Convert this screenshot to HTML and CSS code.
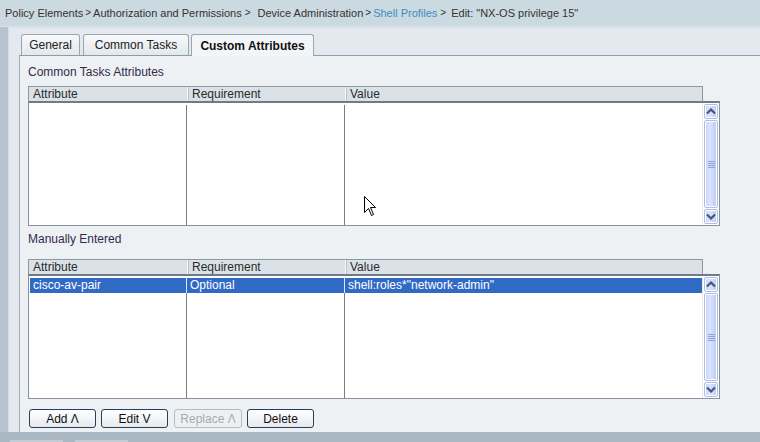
FILE: index.html
```html
<!DOCTYPE html>
<html>
<head>
<meta charset="utf-8">
<link rel="stylesheet" href="styles.css">
</head>
<body>
<div class="crumbs"><span>Policy Elements</span><span class="sep">&gt;</span><span>Authorization and Permissions</span><span class="sep wide">&gt;</span><span>Device Administration</span><span class="sep">&gt;</span><span class="link">Shell Profiles</span><span class="sep last">&gt;</span><span>Edit: "NX-OS privilege 15"</span></div>
<div class="main">
  <div class="strip"></div>
  <div class="frame">
    <div class="tabs">
      <div class="tab t1">General</div>
      <div class="tab t2">Common Tasks</div>
      <div class="tab t3 active">Custom Attributes</div>
    </div>
    <div class="panel">
      <div class="label first">Common Tasks Attributes</div>
      <div class="grid">
        <div class="ghead"><div class="hc c1">Attribute</div><div class="hc c2">Requirement</div><div class="hc c3">Value</div></div>
        <div class="gbody">
          <div class="cols">
            <div class="col c1"></div><div class="col c2"></div><div class="col c3"></div>
          </div>
          <div class="scroll">
            <div class="sbtn"><svg width="10" height="7" viewBox="0 0 10 7"><path d="M1 5.5 L5 1.5 L9 5.5" fill="none" stroke="#46557a" stroke-width="2.2"/></svg></div>
            <div class="thumb"><span class="grip"></span></div>
            <div class="sbtn"><svg width="10" height="7" viewBox="0 0 10 7"><path d="M1 1.5 L5 5.5 L9 1.5" fill="none" stroke="#46557a" stroke-width="2.2"/></svg></div>
          </div>
        </div>
      </div>
      <div class="label second">Manually Entered</div>
      <div class="grid">
        <div class="ghead"><div class="hc c1">Attribute</div><div class="hc c2">Requirement</div><div class="hc c3">Value</div></div>
        <div class="gbody">
          <div class="cols">
            <div class="col c1"><div class="sel">cisco-av-pair</div></div>
            <div class="col c2"><div class="sel">Optional</div></div>
            <div class="col c3"><div class="sel">shell:roles*"network-admin"</div></div>
          </div>
          <div class="scroll">
            <div class="sbtn"><svg width="10" height="7" viewBox="0 0 10 7"><path d="M1 5.5 L5 1.5 L9 5.5" fill="none" stroke="#46557a" stroke-width="2.2"/></svg></div>
            <div class="thumb"><span class="grip"></span></div>
            <div class="sbtn"><svg width="10" height="7" viewBox="0 0 10 7"><path d="M1 1.5 L5 5.5 L9 1.5" fill="none" stroke="#46557a" stroke-width="2.2"/></svg></div>
          </div>
        </div>
      </div>
      <div class="buttons">
        <button class="btn">Add &Lambda;</button>
        <button class="btn">Edit V</button>
        <button class="btn disabled">Replace &Lambda;</button>
        <button class="btn">Delete</button>
      </div>
    </div>
  </div>
</div>
<div class="bottom"><span class="btab"></span><span class="btab"></span></div>
<svg class="cursor" width="13" height="21" viewBox="0 0 13 21"><path d="M0.5 0.5 L0.5 16.5 L4.5 12.5 L7.5 19.5 L9.5 18.5 L6.5 11.5 L11.5 11.5 Z" fill="#fff" stroke="#000" stroke-width="1"/></svg>
</body>
</html>
```
FILE: styles.css
```css
* { box-sizing: border-box; }
html, body { margin: 0; padding: 0; }
body {
  width: 760px;
  height: 442px;
  overflow: hidden;
  font-family: "Liberation Sans", Arial, sans-serif;
  font-size: 12px;
  color: #222;
  background: #e3e9ee;
  position: relative;
}
.crumbs {
  height: 27px;
  background: #cbd9e1;
  border-bottom: 1px solid #d9e3e9;
  display: flex;
  align-items: center;
  padding: 0 0 1px 5px;
  font-size: 11px;
  color: #333;
  white-space: pre;
}
.crumbs .sep { margin: 0 2px; font-size: 10px; }
.crumbs .sep.wide { margin: 0 7px 0 3px; }
.crumbs .sep.last { margin: 0 5px 0 3px; }
.crumbs .link { color: #3a8fc4; }
.main { display: flex; height: 405px; }
.strip { width: 9px; background: #b5c4ce; border-right: 1px solid #d4dde3; }
.frame {
  flex: 1;
  background: #e3e9ee;
  padding: 7px 0 0 10px;
  display: flex;
  flex-direction: column;
  border-top-left-radius: 4px;
  box-shadow: inset 0 1px 0 #d7e0e6;
}
.tabs { display: flex; align-items: flex-end; height: 21px; padding-left: 2px; position: relative; z-index: 1; }
.tab {
  height: 21px;
  border: 1px solid #9aa7b1;
  border-bottom: none;
  border-radius: 3px 3px 0 0;
  background: linear-gradient(#f7f9fa, #e2e8ec);
  display: flex;
  align-items: center;
  justify-content: center;
  font-size: 12px;
  color: #222;
}
.t1 { width: 59px; }
.t2 { width: 106px; margin-left: 3px; }
.t3 { width: 123px; margin-left: 2px; }
.tab.active {
  background: #f3f6f8;
  font-weight: bold;
  height: 22px;
  margin-bottom: -1px;
  color: #111;
}
.panel {
  flex: 1;
  background: #edf1f4;
  border-top: 1px solid #8f9ca6;
  border-left: 1px solid #a3aeb6;
  padding: 9px 0 0 8px;
}
.label { height: 14px; line-height: 14px; color: #35294a; }
.label.second { margin-top: 6px; }
.grid { margin-top: 7px; }
.label.second + .grid { margin-top: 13px; }
.ghead {
  width: 675px;
  height: 15px;
  display: flex;
  background: #dbe2e7;
  border: 1px solid #8c99a3;
  border-bottom: none;
}
.hc { line-height: 14px; padding-left: 4px; color: #2a2a2a; }
.hc.c2, .hc.c3 { border-left: 1px solid #f5f7f9; box-shadow: inset 1px 0 0 #b8c2c9; }
.c1 { width: 158px; }
.c2 { width: 158px; }
.c3 { flex: 1; }
.gbody {
  width: 692px;
  height: 125px;
  display: flex;
  background: #fff;
  border: 1px solid #8593a0;
  border-top: 2px solid #6e7c87;
}
.cols { flex: 1; display: flex; padding-top: 2px; }
.col { height: 100%; }
.col.c2, .col.c3 { border-left: 1px solid #7d7d7d; }
.col.c1 { width: 157px; }
.sel {
  height: 15px;
  line-height: 15px;
  background: #316ac5;
  color: #fff;
  padding-left: 3px;
}
.col.c1 .sel { margin-left: 1px; }
.col.c2 .sel, .col.c3 .sel { border-left: 1px solid #dfe7f4; margin-left: -1px; }
.scroll {
  width: 17px;
  display: flex;
  flex-direction: column;
  gap: 1px;
  padding: 1px;
  background: #fff;
  border-left: 1px solid #e6ebf2;
}
.sbtn, .thumb {
  border: 1px solid #aebde6;
  border-radius: 2px;
  background: linear-gradient(90deg, #c6d3fa, #dbe4fe 40%, #b9caf6);
  box-shadow: 0 0 0 1px #fff inset;
}
.sbtn { height: 15px; display: flex; align-items: center; justify-content: center; }
.thumb { flex: 1; display: flex; align-items: center; justify-content: center; }
.grip {
  width: 7px;
  height: 7px;
  background: repeating-linear-gradient(#8ea2d6 0 1px, transparent 1px 2px);
}
.buttons { display: flex; gap: 5px; margin-top: 10px; padding-left: 1px; }
.btn {
  width: 67px;
  height: 19px;
  padding: 0;
  font-family: "Liberation Sans", Arial, sans-serif;
  font-size: 12px;
  color: #111;
  border: 1px solid #253e60;
  border-radius: 3px;
  background: linear-gradient(#ffffff, #e6eaee);
}
.btn:nth-child(3) { margin-left: 1px; width: 68px; }
.btn.disabled { color: #a7a9ab; border-color: #b5bcc2; background: #eef1f3; }
.bottom {
  height: 10px;
  background: #a9b7c2;
  display: flex;
  align-items: flex-end;
  padding-left: 10px;
  gap: 12px;
}
.btab { width: 53px; height: 2px; background: #c2ccd4; }
.cursor { position: absolute; left: 364px; top: 196px; }
```
